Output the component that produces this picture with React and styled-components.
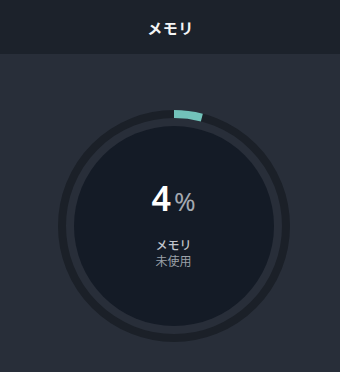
import styled, { createGlobalStyle } from "styled-components";

const GlobalStyle = createGlobalStyle`
  html, body {
    margin: 0;
    padding: 0;
    background: #282e39;
  }
  body {
    font-family: "Noto Sans", "Noto Sans CJK JP", sans-serif;
  }
`;

const percent = 4;
const size = 232;
const ringRadius = 112;
const circumference = 2 * Math.PI * ringRadius;

const Gauge = ({ value }) => {
  const arc = (circumference * value) / 100;
  return (
    <Dial>
      <svg width={size} height={size} viewBox={`0 0 ${size} ${size}`}>
        <circle cx="116" cy="116" r={ringRadius} fill="none" stroke="#1b2028" strokeWidth="8" />
        <circle
          cx="116"
          cy="116"
          r={ringRadius}
          fill="none"
          stroke="#72c2ba"
          strokeWidth="8"
          strokeDasharray={`${arc} ${circumference}`}
          transform="rotate(-90 116 116)"
        />
        <circle cx="116" cy="116" r="100" fill="#141b26" />
      </svg>
      <Readout>
        <Value>
          {value}
          <Unit>%</Unit>
        </Value>
        <Label>メモリ</Label>
        <SubLabel>未使用</SubLabel>
      </Readout>
    </Dial>
  );
};

const App = () => {
  return (
    <Page>
      <GlobalStyle />
      <Header>
        <Title>メモリ</Title>
      </Header>
      <Main>
        <Gauge value={percent} />
      </Main>
    </Page>
  );
};

const Page = styled.div`
  width: 340px;
  height: 372px;
  display: flex;
  flex-direction: column;
  background: #282e39;
  overflow: hidden;
`;

const Header = styled.div`
  height: 54px;
  flex-shrink: 0;
  display: flex;
  align-items: center;
  justify-content: center;
  background: #1c222b;
`;

const Title = styled.h1`
  margin: 0 0 0 1px;
  color: #f4f5f6;
  font-size: 15px;
  font-weight: 700;
  letter-spacing: 0.5px;
`;

const Main = styled.div`
  flex: 1;
  display: flex;
  justify-content: center;
  padding: 56px 0 0 7px;
`;

const Dial = styled.div`
  position: relative;
  width: 232px;
  height: 232px;

  svg {
    display: block;
  }
`;

const Readout = styled.div`
  position: absolute;
  inset: 0;
  display: flex;
  flex-direction: column;
  align-items: center;
  justify-content: center;
  padding-bottom: 4px;
`;

const Value = styled.div`
  color: #ffffff;
  font-size: 34px;
  font-weight: 600;
  line-height: 38px;
  margin-bottom: 18px;
`;

const Unit = styled.span`
  color: #a4a9b0;
  font-size: 26px;
  font-weight: 400;
  margin-left: 3px;
`;

const Label = styled.div`
  color: #c2c6cc;
  font-size: 12px;
  font-weight: 500;
  line-height: 16px;
`;

const SubLabel = styled.div`
  color: #9ba1a9;
  font-size: 12px;
  line-height: 16px;
`;

export default App;
